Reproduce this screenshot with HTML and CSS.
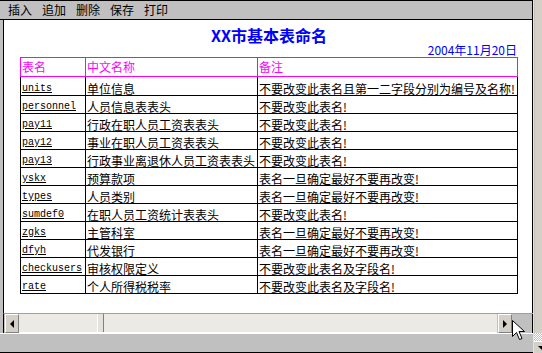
FILE: index.html
```html
<!DOCTYPE html>
<html lang="zh-CN">
<head>
  <meta charset="utf-8" />
  <title>XX市基本表命名</title>
  <link rel="stylesheet" href="styles.css">
</head>
<body>
  <div class="app">
    <div class="win">
      <div class="menubar">
        <span>插入</span><span>追加</span><span>删除</span><span>保存</span><span>打印</span>
      </div>

      <div class="view">
        <div class="page">
          <h1 class="title">XX市基本表命名</h1>
          <div class="date">2004年11月20日</div>
          <table class="names">
            <tr class="head"><th class="c1">表名</th><th class="c2">中文名称</th><th class="c3">备注</th></tr>
            <tr class="first"><td class="code">units</td><td>单位信息</td><td>不要改变此表名且第一二字段分别为编号及名称!</td></tr>
            <tr><td class="code">personnel</td><td>人员信息表表头</td><td>不要改变此表名!</td></tr>
            <tr><td class="code">pay11</td><td>行政在职人员工资表表头</td><td>不要改变此表名!</td></tr>
            <tr><td class="code">pay12</td><td>事业在职人员工资表表头</td><td>不要改变此表名!</td></tr>
            <tr><td class="code">pay13</td><td>行政事业离退休人员工资表表头</td><td>不要改变此表名!</td></tr>
            <tr><td class="code">yskx</td><td>预算款项</td><td>表名一旦确定最好不要再改变!</td></tr>
            <tr><td class="code">types</td><td>人员类别</td><td>表名一旦确定最好不要再改变!</td></tr>
            <tr><td class="code">sumdef0</td><td>在职人员工资统计表表头</td><td>不要改变此表名!</td></tr>
            <tr><td class="code">zgks</td><td>主管科室</td><td>表名一旦确定最好不要再改变!</td></tr>
            <tr><td class="code">dfyh</td><td>代发银行</td><td>表名一旦确定最好不要再改变!</td></tr>
            <tr><td class="code">checkusers</td><td>审核权限定义</td><td>不要改变此表名及字段名!</td></tr>
            <tr><td class="code">rate</td><td>个人所得税税率</td><td>不要改变此表名及字段名!</td></tr>
          </table>
        </div>
      </div>

      <div class="hscroll">
        <div class="sb-btn"><span class="arrow-left"></span></div>
        <div class="track"><div class="thumb"></div></div>
        <div class="sb-btn"><span class="arrow-right"></span></div>
        <div class="corner"></div>
      </div>

      <div class="status"></div>
    </div>

    <div class="vscroll">
      <div class="vs-fill"></div>
      <div class="vs-check"></div>
      <div class="vs-btn"><span class="arrow-down"></span></div>
    </div>
  </div>

  <!-- mouse pointer over the scrollbar -->
  <svg class="cursor" width="14" height="22" viewBox="0 0 14 22">
    <path d="M0.5 0.5 L0.5 16.5 L4.5 12.5 L7.5 19.5 L10 18.5 L7 11.5 L12.5 11.5 Z" fill="#fff" stroke="#000" stroke-width="1"/>
  </svg>
</body>
</html>
```

FILE: styles.css
```css
html, body { margin: 0; padding: 0; }
body { background: #c0c0c0; font-family: "Noto Sans CJK SC", "Liberation Sans", sans-serif; font-size: 12px; width: 542px; height: 353px; overflow: hidden; position: relative; }

.app { display: flex; height: 353px; }
.win { width: 533px; display: flex; flex-direction: column; }

.menubar { height: 20px; box-sizing: border-box; border-top: 1px solid #000; border-bottom: 1px solid #000; border-right: 1px solid #000; background: #c0c0c0; display: flex; gap: 10px; padding-left: 8px; line-height: 17px; color: #000; }

.view { height: 293px; margin-left: 3px; box-sizing: border-box; border-left: 1px solid #000; border-right: 1px solid #000; background: #fff; overflow: hidden; }
.page { width: 498px; margin-left: 16px; }

.title { margin: 5px 0 0; font-size: 16px; line-height: 20px; height: 19px; font-weight: bold; color: #0000ff; text-align: center; }
.date { color: #0000ff; font-size: 12px; line-height: 12px; height: 13px; text-align: right; padding-right: 1px; }

.names { border-collapse: collapse; border-spacing: 0; width: 498px; table-layout: fixed; }
.names th { border: 1px solid #ff00ff; color: #ff00ff; font-weight: normal; text-align: left; height: 18px; padding: 0 1px; line-height: 14px; vertical-align: middle; }
.names th.c1 { width: 62px; }
.names th.c2 { width: 169px; }
.names td { border: 1px solid #000; height: 17px; padding: 0 1px; line-height: 13px; vertical-align: bottom; text-decoration: underline; white-space: nowrap; overflow: hidden; color: #000; }
.names tr.first td { height: 18px; }
.names td.code { font-family: "Liberation Mono", "DejaVu Sans Mono", monospace; font-size: 10px; line-height: 12px; }

.hscroll { height: 20px; box-sizing: border-box; display: flex; margin-left: 3px; border-left: 1px solid #000; border-top: 1px solid #a0a0a0; background: #c0c0c0; }
.sb-btn { width: 14px; box-sizing: border-box; background: #d4d0c8; border: 1px solid #fff; border-right-color: #808080; border-bottom-color: #808080; display: flex; align-items: center; justify-content: center; margin-left: 1px; }
.track { width: 478px; background: #eceae4; position: relative; border-bottom: 1px solid #fff; box-sizing: border-box; }
.thumb { position: absolute; left: 78px; top: 0; bottom: 0; width: 7px; background: #e4e2dc; border-left: 1px solid #fff; border-right: 1px solid #808080; box-sizing: border-box; }
.corner { flex: 1; background: #c0c0c0; border-right: 1px solid #000; }

.arrow-left { width: 0; height: 0; border-top: 4px solid transparent; border-bottom: 4px solid transparent; border-right: 4px solid #000; }
.arrow-right { width: 0; height: 0; border-top: 4px solid transparent; border-bottom: 4px solid transparent; border-left: 4px solid #000; }
.arrow-down { width: 0; height: 0; border-left: 4px solid transparent; border-right: 4px solid transparent; border-top: 4px solid #000; margin-left: 4px; }

.status { height: 20px; box-sizing: border-box; border-top: 1px solid #fff; border-bottom: 1px solid #000; background: #c0c0c0; }

.vscroll { width: 9px; display: flex; flex-direction: column; background: #d4d0c8; border-left: 1px solid #e4e2dc; box-sizing: border-box; }
.vs-fill { flex: 1; border-left: 1px solid #c8c4bc; }
.vs-check { height: 8px; background-image: repeating-conic-gradient(#fff 0 25%, #c0c0c0 0 50%); background-size: 2px 2px; }
.vs-btn { height: 11px; background: #d4d0c8; border-top: 1px solid #fff; display: flex; align-items: center; }

.cursor { position: absolute; left: 512px; top: 320px; }
```
